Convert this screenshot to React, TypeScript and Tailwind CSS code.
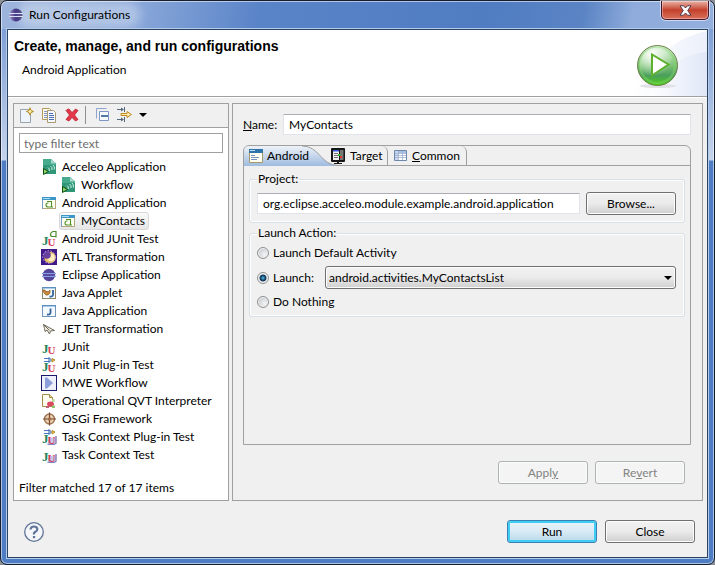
import { useState } from "react";
import type { ReactNode } from "react";

type IconProps = { children: ReactNode };

function Icon({ children }: IconProps) {
  return (
    <svg width="16" height="16" viewBox="0 0 16 16" className="block shrink-0" aria-hidden="true">
      {children}
    </svg>
  );
}

function AcceleoIcon() {
  return (
    <Icon>
      <path d="M2 0h8l5 4.500V15H2z" fill="#2f9678" />
      <path d="M2 0h8l5 4.500V6H2z" fill="#46ab8c" />
      <path d="M10 0l5 4.500h-5z" fill="#a5d8c6" />
      <path d="M7 8.500q1.800 1 1.300 3.500M9.500 7q2 1 1.500 4M12 6q2 1.500 1.300 4.500" fill="none" stroke="#d8f3ea" />
      <path d="M2.500 9.500l5 3-5 3z" fill="#8ed36c" stroke="#114d11" />
    </Icon>
  );
}

function AndroidAppIcon() {
  return (
    <Icon>
      <rect x="1.500" y="2.500" width="13" height="11" fill="#fffef4" stroke="#b5a77b" />
      <path d="M1 2h14v3H1z" fill="#3d97c6" />
      <path d="M2 3h7v1H2z" fill="#a8dcf2" />
      <path d="M1.500 5v9" stroke="#7d9cc0" />
      <path d="M6 6.500h4.500v5.500h-3.500q-2 0-2-2t2-2h.5M10.500 12h1.500" fill="none" stroke="#4f9026" strokeWidth="1.100" />
    </Icon>
  );
}

function JUnitIcon({ badge }: { badge?: "android" | "plug" | "task" | "plugtask" }) {
  return (
    <Icon>
      {(badge === "task" || badge === "plugtask") && (
        <>
          <path d="M8 9h7v4l-3 3H6z" fill="#c5c8e8" />
          <path d="M15 7v7l-2 1.500H7" fill="none" stroke="#8a86bd" strokeWidth="1.500" />
        </>
      )}
      <text x="1" y="14" fontFamily="Liberation Serif, serif" fontWeight="bold" fontSize="13" fill="#23855b">J</text>
      <text x="6.500" y="15" fontFamily="Liberation Serif, serif" fontWeight="bold" fontSize="11" fill="#d5405b">U</text>
      {badge === "android" && <path d="M15 5.500H11.500Q9.500 5.500 9.500 3.500T12 .5h3v6" fill="none" stroke="#4f8f2a" strokeWidth="1.200" />}
      {(badge === "plug" || badge === "plugtask") && (
        <>
          <path d="M3 1.500h5M3 4.500h5" stroke="#4a76bb" strokeWidth="1.200" />
          <path d="M8 .5l2.500 2.500L8 5.500z" fill="#d4e6fb" stroke="#3467ad" />
          <path d="M11 1.500l3 1.500-3 2z" fill="#f7d779" stroke="#b58720" />
        </>
      )}
    </Icon>
  );
}

function AtlIcon() {
  return (
    <Icon>
      <rect width="16" height="16" fill="#3f1a88" />
      <circle cx="9" cy="8.500" r="5.800" fill="#e9c06c" />
      <circle cx="10" cy="8.500" r="3.800" fill="#fff0ba" />
      <circle cx="6" cy="6" r="3.800" fill="#67409d" />
      <circle cx="8" cy="8" r="6.200" fill="none" stroke="#c9b6ec" strokeDasharray="1.500 1.500" />
    </Icon>
  );
}

function EclipseIcon() {
  return (
    <Icon>
      <circle cx="8" cy="8" r="6.200" fill="#54449a" />
      <path d="M1 6.500h14M1 9.500h14" stroke="#85a0e6" />
      <path d="M2 8h12" stroke="#6657a8" />
    </Icon>
  );
}

function JavaIcon({ applet }: { applet?: boolean }) {
  return (
    <Icon>
      <rect x="1.500" y="2.500" width="13" height="11" fill="#f5faff" stroke={applet ? "#8e8666" : "#7196bb"} />
      <path d="M1 2h14v2H1z" fill="#5e8fbe" />
      <path d="M2 3h12v1H2z" fill="#a7ccec" />
      {applet ? (
        <>
          <path d="M12 5v4.500q0 2.500-3.500 2" fill="none" stroke="#31649c" strokeWidth="1.800" />
          <path d="M2 5h2l1 2 1-1 1 1 2-2v3l-2 2H5L3 8z" fill="#c98b3d" stroke="#94581b" strokeWidth=".7" />
        </>
      ) : (
        <path d="M9.500 5.500v4q0 2.500-3.500 2" fill="none" stroke="#31649c" strokeWidth="1.800" />
      )}
    </Icon>
  );
}

function JetIcon() {
  return (
    <Icon>
      <path d="M2.500 3.500l11 6-4 .5-1 3-2.500-4-2 1.500-.5-3z" fill="#f3f0e3" stroke="#6d6a5d" />
      <path d="M2.500 3.500l6 6" stroke="#6d6a5d" />
    </Icon>
  );
}

function MweIcon() {
  return (
    <Icon>
      <rect x=".5" y=".5" width="15" height="15" fill="#eef0fa" stroke="#18186f" />
      <path d="M4 2.500h2l6 5.500-6 5.500H4z" fill="#8d9fda" />
    </Icon>
  );
}

function QvtIcon() {
  return (
    <Icon>
      <path d="M1.500 1.500h7l3 3v9h-10z" fill="#fffdf0" stroke="#a38b45" />
      <path d="M8.500 1.500v3h3" fill="#f0dfa0" stroke="#a38b45" />
      <circle cx="12.500" cy="7.500" r="1.500" fill="#bce2a5" />
      <ellipse cx="9.500" cy="11" rx="3.500" ry="2.500" fill="#d94a5f" />
      <path d="M5 13h3v2H5z" fill="#c06070" />
      <path d="M11 12.500h3v2.500h-3z" fill="#8bc66d" />
    </Icon>
  );
}

function OsgiIcon() {
  return (
    <Icon>
      <circle cx="8.500" cy="8" r="5" fill="#ead0b3" stroke="#a17654" strokeWidth="1.500" />
      <path d="M8.500 1.500v13M2 8h13" stroke="#774a30" strokeWidth="1.200" />
      <circle cx="8.500" cy="8" r="1.800" fill="#a36a45" />
    </Icon>
  );
}

type Item = { name: string; icon: ReactNode; child?: boolean };

const items: Item[] = [
  { name: "Acceleo Application", icon: <AcceleoIcon /> },
  { name: "Workflow", icon: <AcceleoIcon />, child: true },
  { name: "Android Application", icon: <AndroidAppIcon /> },
  { name: "MyContacts", icon: <AndroidAppIcon />, child: true },
  { name: "Android JUnit Test", icon: <JUnitIcon badge="android" /> },
  { name: "ATL Transformation", icon: <AtlIcon /> },
  { name: "Eclipse Application", icon: <EclipseIcon /> },
  { name: "Java Applet", icon: <JavaIcon applet /> },
  { name: "Java Application", icon: <JavaIcon /> },
  { name: "JET Transformation", icon: <JetIcon /> },
  { name: "JUnit", icon: <JUnitIcon /> },
  { name: "JUnit Plug-in Test", icon: <JUnitIcon badge="plug" /> },
  { name: "MWE Workflow", icon: <MweIcon /> },
  { name: "Operational QVT Interpreter", icon: <QvtIcon /> },
  { name: "OSGi Framework", icon: <OsgiIcon /> },
  { name: "Task Context Plug-in Test", icon: <JUnitIcon badge="plugtask" /> },
  { name: "Task Context Test", icon: <JUnitIcon badge="task" /> },
];

function TitleBar() {
  return (
    <div className="flex h-[27px] items-start justify-between">
      <div className="flex h-full items-center pt-px pl-[2px]">
        <svg width="16" height="16" viewBox="0 0 16 16" aria-hidden="true">
          <defs>
            <linearGradient id="ecl" x1="0" x2="1">
              <stop offset="0" stopColor="#a592bd" />
              <stop offset=".45" stopColor="#3b3080" />
              <stop offset="1" stopColor="#2a1f66" />
            </linearGradient>
          </defs>
          <circle cx="8" cy="8" r="6.500" fill="url(#ecl)" />
          <path d="M1 6.500h14M1 9.500h14" stroke="#d5dcf4" />
        </svg>
        <h1 className="rounded-full bg-white/30 px-[5px] text-[12px] leading-4 shadow-[0_0_8px_6px_rgba(255,255,255,0.3)]">Run Configurations</h1>
      </div>
      <button
        aria-label="Close window"
        className="flex h-[19px] w-12 items-center justify-center rounded-b-[5px] border border-t-0 border-[#48152a] bg-linear-to-b from-[#e8b3a9] from-0% via-[#c3402b] via-50% to-[#d9705a] shadow-[0_0_0_1px_rgba(255,255,255,0.55),inset_0_0_0_1px_rgba(255,255,255,0.35)]"
      >
        <svg width="13" height="11" viewBox="0 0 13 11" aria-hidden="true">
          <path d="M1 .8h3.500l2 2.200 2-2.200H12L8.700 5.500 12 10.200H8.500l-2-2.200-2 2.200H1l3.300-4.700z" fill="#fff" stroke="#54394a" />
        </svg>
      </button>
    </div>
  );
}

function Banner() {
  return (
    <header className="relative flex h-[67px] items-start justify-between border-b border-[#a0a0a0] bg-white">
      <svg className="absolute top-0 right-0" width="90" height="66" viewBox="0 0 90 66" aria-hidden="true">
        <defs>
          <linearGradient id="swoosh" x1="0" x2="1">
            <stop offset="0" stopColor="#fff" />
            <stop offset="1" stopColor="#dfe6f7" />
          </linearGradient>
        </defs>
        <path d="M14 66C28 34 56 8 90 1v65z" fill="url(#swoosh)" opacity=".6" />
        <path d="M32 66C44 38 66 24 90 22v44z" fill="url(#swoosh)" opacity=".9" />
      </svg>
      <div className="relative pt-2 pl-[6px]">
        <h2 className="font-['Liberation_Sans',sans-serif] text-[14px] leading-4 font-bold">Create, manage, and run configurations</h2>
        <p className="pt-2 pl-2 leading-4">Android Application</p>
      </div>
      <svg className="relative mt-3 mr-[26px] shrink-0" width="46" height="48" viewBox="0 0 46 48" aria-hidden="true">
        <defs>
          <linearGradient id="orb" x1="0" y1="0" x2="0" y2="1">
            <stop offset="0" stopColor="#d6f0d0" />
            <stop offset=".5" stopColor="#7cc274" />
            <stop offset=".75" stopColor="#4a9e5c" />
            <stop offset="1" stopColor="#4fd010" />
          </linearGradient>
          <radialGradient id="shine" cx=".35" cy=".2" r=".6">
            <stop offset="0" stopColor="#fff" stopOpacity=".95" />
            <stop offset="1" stopColor="#fff" stopOpacity="0" />
          </radialGradient>
        </defs>
        <ellipse cx="23" cy="44" rx="18" ry="2" fill="#e0e0e6" />
        <circle cx="22.500" cy="23.500" r="20" fill="url(#orb)" stroke="#6c8046" />
        <circle cx="22.500" cy="23.500" r="17.500" fill="none" stroke="#7ed36a" strokeWidth="2.500" opacity=".45" />
        <circle cx="22.500" cy="23.500" r="18" fill="url(#shine)" />
        <path d="M17 12.500v21L33.500 22.500z" fill="#fff" stroke="#5cb02c" strokeWidth="2" />
      </svg>
    </header>
  );
}

const toolButton = "flex h-[22px] w-[23px] items-center justify-center";

function Toolbar() {
  return (
    <div className="flex h-6 items-center border-b border-[#a0a0a0] bg-[#f0f0f0] pb-px">
      <button className={toolButton} aria-label="New">
        <Icon>
          <path d="M2.500 2.500h8l2 2v11h-10z" fill="#eef4fc" stroke="#9aa3ae" />
          <path d="M12 .8l1 2.700 2.600 1-2.600 1-1 2.700-1-2.700-2.600-1 2.600-1z" fill="#fff3ae" stroke="#b48a22" />
        </Icon>
      </button>
      <button className={toolButton} aria-label="Duplicate">
        <Icon>
          <path d="M1.500 1.500h7l1 1v10h-8z" fill="#fffbe8" stroke="#b3995c" />
          <path d="M3 4.500h3M3 6.500h3M3 8.500h3M3 10.500h3" stroke="#7d96c5" />
          <path d="M6.500 3.500h6l2 2v10h-8z" fill="#f5f8fe" stroke="#a89a70" />
          <path d="M8 6.500h4M8 8.500h5M8 10.500h5M8 12.500h5" stroke="#4a6db0" />
        </Icon>
      </button>
      <button className={toolButton} aria-label="Delete">
        <Icon>
          <path d="M3 2.500l2-.5 3 3.500L11.500 2l2.500 1.500L10.500 8l3.500 4.500-2.500 1.500L8 10.500 5 14l-3-1.500L5.500 8 2 3.500z" fill="#e2384a" stroke="#bb2331" strokeWidth=".8" />
        </Icon>
      </button>
      <span className="mr-[5px] ml-[2px] h-[18px] w-px bg-[#8f8f8f]" />
      <button className={toolButton} aria-label="Collapse all">
        <Icon>
          <path d="M1.500 11.500v-10h10" fill="none" stroke="#8fa5cd" />
          <path d="M4.500 4.500h9v9h-9z" fill="#f6faff" stroke="#7d98c7" />
          <path d="M6 9h7" stroke="#1f4f80" strokeWidth="1.500" />
        </Icon>
      </button>
      <button className="flex h-[22px] items-center gap-[6px] pl-[3px]" aria-label="Filter">
        <Icon>
          <path d="M0 2.500h6M0 12.500h6M7.500 0v5M7.500 10v5" stroke="#56697b" />
          <path d="M4 .5l3 2-3 2zM4 10.500l3 2-3 2z" fill="#56697b" />
          <path d="M4 6.500h6V4.500l4.500 3-4.500 3V8.500H4z" fill="#ffeab0" stroke="#c08c22" />
        </Icon>
        <svg width="8" height="4" viewBox="0 0 8 4" className="shrink-0" aria-hidden="true">
          <path d="M0 0h8L4 4z" />
        </svg>
      </button>
    </div>
  );
}

function ConfigurationTree() {
  const [selected, setSelected] = useState("MyContacts");
  return (
    <section className="flex w-[216px] shrink-0 flex-col border border-[#a0a0a0] bg-white">
      <Toolbar />
      <div className="flex flex-1 flex-col px-[5px] pt-[5px] pb-1">
        <input
          aria-label="Filter"
          placeholder="type filter text"
          className="h-5 w-full border border-[#a0a0a0] px-1 outline-none placeholder:text-[#6d6d6d] placeholder:opacity-100"
        />
        <ul className="flex-1 pt-[5px]">
          {items.map((item) => (
            <li key={item.name} className={item.child ? "pl-[40px]" : "pl-[21px]"}>
              <button
                onClick={() => setSelected(item.name)}
                className={
                  "flex h-[18px] items-center gap-[5px] rounded-[3px] border pr-[3px] whitespace-nowrap " +
                  (item.name === selected ? "border-[#d9d9d9] bg-linear-to-b from-[#fafafa] to-[#e6e6e6]" : "border-transparent")
                }
              >
                {item.icon}
                <span>{item.name}</span>
              </button>
            </li>
          ))}
        </ul>
        <p className="leading-4">Filter matched 17 of 17 items</p>
      </div>
    </section>
  );
}

const sunken = "h-[21px] min-w-0 flex-1 rounded-[1px] border border-[#e2e3ea] border-t-[#abadb3] bg-white px-[5px] outline-none";
const pushButton =
  "h-[23px] w-[90px] rounded-[3px] border border-[#707070] bg-linear-to-b from-[#f2f2f2] from-0% via-[#ebebeb] via-49% to-[#cfcfcf] shadow-[inset_0_0_0_1px_#fcfcfc]";
const disabledButton = "h-[23px] w-[90px] rounded-[3px] border border-[#adb2b5] bg-[#f4f4f4] text-[#838383] shadow-[inset_0_0_0_1px_#fcfcfc]";
const radio =
  "m-0 h-3 w-3 shrink-0 appearance-none rounded-full border border-[#8e8f8f] bg-[radial-gradient(circle_at_65%_65%,#f4f4f4_0%,#cfd3d8_60%)] shadow-[inset_0_0_0_1px_#f4f4f4] checked:bg-[radial-gradient(circle,#5fc0ea_0,#17567f_2px,#17304d_3px,#e8eef2_4px)]";
const group = "m-0 min-w-0 rounded-[3px] border border-[#d5dfe5] pr-2 pl-[7px] shadow-[inset_0_0_0_1px_#fff]";

function Tabs() {
  return (
    <div role="tablist" className="flex h-5 items-stretch border-b border-[#a0a0a0]">
      <button role="tab" aria-selected="true" className="relative flex w-[84px] items-center gap-[3px] pl-1">
        <svg className="absolute top-0 left-0" width="96" height="20" viewBox="0 0 96 20" aria-hidden="true">
          <defs>
            <linearGradient id="tab" x1="0" y1="0" x2="0" y2="1">
              <stop offset="0" stopColor="#eef2f8" />
              <stop offset="1" stopColor="#9ebbdf" />
            </linearGradient>
          </defs>
          <path d="M0 20V5Q1 0 5 0h53C76 0 76 19 96 20z" fill="url(#tab)" />
          <path d="M58 0C76 0 76 19 94 19.500" fill="none" stroke="#a0a0a0" />
        </svg>
        <span className="relative">
          <Icon>
            <path d="M1.500 2.500h13v12h-13z" fill="#fffef2" stroke="#a89868" />
            <path d="M1 1h14v4H1z" fill="#2f73a9" />
            <path d="M2 2h5v1H2z" fill="#b9dff5" />
            <path d="M3 7.500h4M3 9.500h8M3 11.500h6" stroke="#7894c0" />
          </Icon>
        </span>
        <span className="relative">Android</span>
      </button>
      <button role="tab" aria-selected="false" className="relative flex w-[60px] items-center gap-[3px] rounded-tr-[6px] border-r border-[#a0a0a0] pl-[3px]">
        <Icon>
          <rect x="0" y="0" width="14" height="14" rx="1" fill="#151515" />
          <path d="M2 2h6v10H2z" fill="#eee" />
          <path d="M2 2h6v1.500H2z" fill="#3357d8" />
          <path d="M3 5.500h4M3 7.500h4M3 9.500h4" stroke="#777" />
          <path d="M9 2h3.500v10H9z" fill="#777" />
          <path d="M7 6h2.500v2H7z" fill="#35ba35" />
          <path d="M9 8h2v2H9z" fill="#e33" />
          <path d="M6 14h2v1h3v1H3v-1h3z" fill="#151515" />
        </Icon>
        <span>Target</span>
      </button>
      <button role="tab" aria-selected="false" className="flex w-[79px] items-center gap-[3px] rounded-tr-[6px] border-r border-[#a0a0a0] pl-[5px]">
        <Icon>
          <path d="M1.500 2.500h12v10h-12z" fill="#fff" stroke="#6e88ac" />
          <path d="M2 3h11v2H2z" fill="#a9c1e6" />
          <path d="M2 3h3v9H2z" fill="#c8d8f1" />
          <path d="M2 5.500h11M2 7.500h11M2 9.500h11M5.500 3v9M9.500 3v9" stroke="#9fb1ce" strokeWidth=".8" />
        </Icon>
        <span>
          <u>C</u>ommon
        </span>
      </button>
    </div>
  );
}

function Details() {
  return (
    <section className="flex min-w-0 flex-1 flex-col border border-[#a0a0a0] pt-[10px] pr-[11px] pb-4 pl-[10px]">
      <div className="flex items-center">
        <label htmlFor="name" className="w-10 shrink-0">
          <u>N</u>ame:
        </label>
        <input id="name" defaultValue="MyContacts" className={sunken} />
      </div>
      <div className="mt-[10px] flex-1 rounded-t-[6px] border border-[#a0a0a0]">
        <Tabs />
        <div className="flex flex-col gap-[2px] p-[5px]">
          <fieldset className={group + " pt-[5px] pb-[7px]"}>
            <legend className="bg-[#f0f0f0] px-px leading-4">
              <label htmlFor="project">Project:</label>
            </legend>
            <div className="flex items-center gap-[6px]">
              <input id="project" defaultValue="org.eclipse.acceleo.module.example.android.application" className={sunken} />
              <button className={pushButton}>Browse...</button>
            </div>
          </fieldset>
          <fieldset className={group + " flex flex-col pt-1 pb-[6px]"}>
            <legend className="bg-[#f0f0f0] px-px leading-4">Launch Action:</legend>
            <div className="flex flex-col gap-[5px]">
              <label className="flex h-4 items-center gap-1">
                <input type="radio" name="action" className={radio} />
                Launch Default Activity
              </label>
              <div className="flex items-center">
                <label className="flex w-[68px] items-center gap-1">
                  <input type="radio" name="action" defaultChecked className={radio} />
                  Launch:
                </label>
                <div className="relative flex-1">
                  <select
                    aria-label="Activity"
                    className="block h-[23px] w-full appearance-none rounded-[3px] border border-[#707070] bg-linear-to-b from-[#f2f2f2] from-0% via-[#ebebeb] via-49% to-[#cfcfcf] px-[3px] shadow-[inset_0_0_0_1px_#fcfcfc] outline-none"
                  >
                    <option>android.activities.MyContactsList</option>
                  </select>
                  <svg className="pointer-events-none absolute top-[10px] right-1" width="8" height="4" viewBox="0 0 8 4" aria-hidden="true">
                    <path d="M0 0h8L4 4z" />
                  </svg>
                </div>
              </div>
              <label className="flex h-4 items-center gap-1">
                <input type="radio" name="action" className={radio} />
                Do Nothing
              </label>
            </div>
          </fieldset>
        </div>
      </div>
      <div className="mt-4 flex justify-end gap-[7px] pr-[6px]">
        <button disabled className={disabledButton}>
          Appl<u>y</u>
        </button>
        <button disabled className={disabledButton}>
          Re<u>v</u>ert
        </button>
      </div>
    </section>
  );
}

export default function App() {
  return (
    <div className="min-h-screen bg-[#8b8f96]">
      <div className="flex min-h-screen flex-col rounded-[7px] border border-[#161d2c] bg-[linear-gradient(to_bottom,transparent_28px,#7f9fd6_28px,#c5d4ec_159px,#4f7dc3_160px),linear-gradient(100deg,#9db5dd_0%,#86a5d8_18%,#5a84c8_32%,#507cc2_60%,#5a84c4_72%,#8eabdb_78%,#9bb5e0_100%)] px-[5px] pb-[5px] font-[Lato,'Noto_Sans',sans-serif] text-[12px] leading-4 text-black shadow-[inset_0_0_0_1px_rgba(255,255,255,0.55)]">
        <TitleBar />
        <div className="flex flex-1 flex-col border border-[#b5cbea]">
          <main className="flex flex-1 flex-col border border-[#2c4463] bg-[#f0f0f0]">
            <Banner />
            <div className="flex flex-1 gap-[3px] border-t border-white pt-[5px] pr-1 pl-[5px]">
              <ConfigurationTree />
              <Details />
            </div>
            <footer className="flex items-center justify-between pt-[19px] pr-3 pb-[14px] pl-4">
              <button aria-label="Help">
                <svg width="20" height="20" viewBox="0 0 20 20" className="block" aria-hidden="true">
                  <circle cx="10" cy="10" r="9.300" fill="#f4f6f9" stroke="#60759a" strokeWidth="1.300" />
                  <path d="M6.500 7.500Q6.800 4.500 10 4.500t3.300 2.700Q13.300 9 11.500 9.800T10 12.500" fill="none" stroke="#60759a" strokeWidth="2.200" />
                  <path d="M8.900 14h2.300v2.200H8.900z" fill="#60759a" />
                </svg>
              </button>
              <div className="flex gap-2">
                <button className="h-[23px] w-[90px] rounded-[3px] border border-[#3c7fb1] bg-linear-to-b from-[#eaf4fa] from-0% via-[#d9ebf5] via-49% to-[#b7d8ea] shadow-[inset_0_0_0_2px_#3fcdf5]">Run</button>
                <button className={pushButton}>Close</button>
              </div>
            </footer>
          </main>
        </div>
      </div>
    </div>
  );
}
